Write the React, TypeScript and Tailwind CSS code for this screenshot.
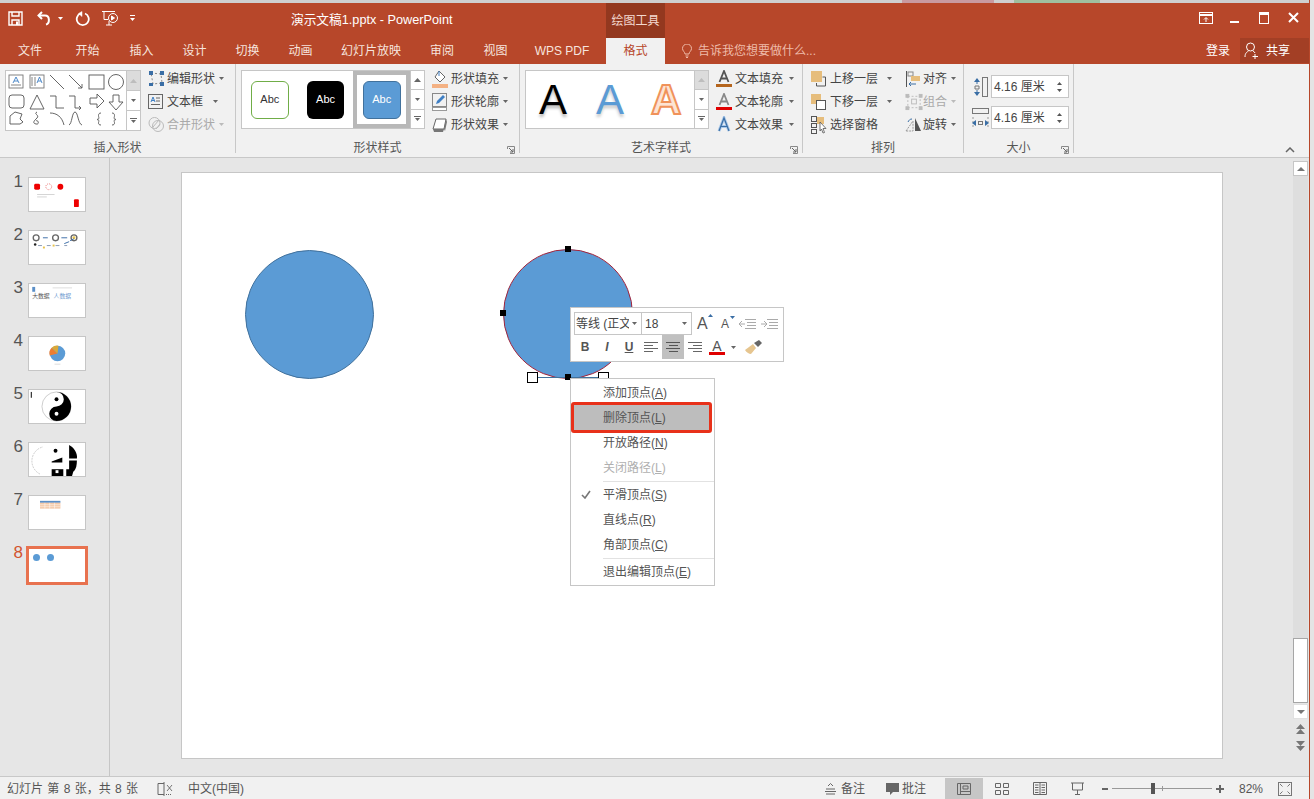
import React from "react";

const Caret = ({ color = "#666" }: { color?: string }) => (
  <svg width="5" height="3" viewBox="0 0 5 3" className="flex-none">
    <path d="M0 0h5L2.5 3z" fill={color} />
  </svg>
);

function RibbonBtn({
  icon,
  label,
  caretGap = "ml-[4px]",
  disabled,
  caret = true,
  slot = "w-[19px]",
}: {
  icon: React.ReactNode;
  label: string;
  caretGap?: string;
  disabled?: boolean;
  caret?: boolean;
  slot?: string;
}) {
  return (
    <div className={`flex items-center h-[23px] text-[12px] whitespace-nowrap ${disabled ? "text-[#a9a9a9]" : "text-[#444]"}`}>
      <span className={`${slot} h-[18px] flex-none flex items-center`}>{icon}</span>
      <span>{label}</span>
      {caret ? (
        <span className={caretGap}>
          <Caret color={disabled ? "#bbb" : "#666"} />
        </span>
      ) : null}
    </div>
  );
}

function ScrollCol({ topDisabled, rows = "h-[59px]" }: { topDisabled?: boolean; rows?: string }) {
  return (
    <div className={`w-[14px] flex-none flex flex-col border border-l-0 border-[#c6c6c6] ${rows}`}>
      <div className={`flex-1 flex items-center justify-center border-b border-[#c6c6c6] ${topDisabled ? "bg-[#dcdcdc]" : "bg-white"}`}>
        <svg width="7" height="4" viewBox="0 0 7 4">
          <path d="M0 4h7L3.5 0z" fill={topDisabled ? "#bdbdbd" : "#666"} />
        </svg>
      </div>
      <div className="flex-1 flex items-center justify-center border-b border-[#c6c6c6] bg-white">
        <Caret />
      </div>
      <div className="flex-1 flex flex-col items-center justify-center gap-[1px] bg-white">
        <div className="w-[7px] h-px bg-[#666]" />
        <Caret />
      </div>
    </div>
  );
}

function Group({ label, width, launcher, children }: { label: string; width: string; launcher?: boolean; children: React.ReactNode }) {
  return (
    <div className={`${width} flex-none flex flex-col pt-[3px] mb-[4px] border-r border-[#c8c8c8] relative`}>
      <div className="h-[70px] flex-none flex items-start">{children}</div>
      <div className="h-[16px] pt-[5px] flex items-center justify-center text-[12px] text-[#555]">{label}</div>
      {launcher ? (
        <svg width="8" height="8" viewBox="0 0 8 8" className="absolute right-[4px] -bottom-[1px]">
          <path d="M0.5 3V0.5H7.5V7.5H3" fill="none" stroke="#888" />
          <path d="M2 2l4 4M6 3v3H3" fill="none" stroke="#666" />
        </svg>
      ) : null}
    </div>
  );
}

function ShapesGallery() {
  return (
    <svg width="120" height="59" viewBox="0 0 120 59" fill="none" stroke="#555" strokeWidth="0.9">
      <rect x="3" y="4" width="14" height="13" stroke="#777" />
      <path d="M7 12l3-6 3 6M8 10h4" stroke="#3f7fc4" />
      <path d="M5 14h10" stroke="#777" />
      <rect x="24" y="4" width="14" height="13" stroke="#777" />
      <path d="M26 6v9M29 6v9" stroke="#777" />
      <path d="M31 12l2.500-6 2.500 6M32 10h3" stroke="#3f7fc4" />
      <path d="M44 4l14 14" />
      <path d="M63 4l13 13M76 13v4h-4" />
      <rect x="83" y="4" width="15" height="14" />
      <circle cx="110" cy="11" r="7.500" />
      <rect x="3" y="24" width="15" height="13" rx="3" />
      <path d="M31 24l7 14H24z" />
      <path d="M44 25h6v12h8" />
      <path d="M63 25h6v12h6M73 35l2 2-2 2" />
      <path d="M84 27h7v-4l7 7-7 7v-4h-7z" />
      <path d="M107 24h6v7h4l-7 8-7-8h4z" />
      <path d="M4 53V45l5-4 7 2-2 5 3 3-3 2z" />
      <path d="M31 41c-4 2 3 3 0 6s-5 5-1 6 2-5 0-3" />
      <path d="M44 42c7 0 12 4 14 12" />
      <path d="M63 54c3-1 3-13 6-13s3 12 7 13" />
      <path d="M95 42c-4 0-2 5-2 5 0 1-1 1-2 1.500 1 .5 2 .5 2 1.500 0 0-2 4 2 4" />
      <path d="M106 42c4 0 2 5 2 5 0 1 1 1 2 1.500-1 .5-2 .5-2 1.500 0 0 2 4-2 4" />
    </svg>
  );
}

const Abc = ({ cls }: { cls: string }) => (
  <div className={`w-[38px] h-[38px] rounded-[6px] flex items-center justify-center text-[11px] ${cls}`}>Abc</div>
);

const IconEditShape = (
  <svg width="17" height="17" viewBox="0 0 17 17" fill="none">
    <path d="M3 3l10 1 1 9-9 1z" stroke="#8a8a8a" strokeDasharray="2 2" />
    <g fill="#3a6ea5">
      <rect x="1" y="1" width="4" height="4" />
      <rect x="12" y="1" width="4" height="4" />
      <rect x="12" y="12" width="4" height="4" />
      <rect x="1" y="13" width="4" height="3" />
    </g>
  </svg>
);
const IconTextBox = (
  <svg width="15" height="15" viewBox="0 0 15 15" fill="none">
    <rect x="0.500" y="0.500" width="14" height="14" stroke="#666" />
    <path d="M3 8l2-5 2 5M3.700 6.500h2.600" stroke="#3f7fc4" />
    <path d="M8 4h4M8 7h4M3 10.500h9" stroke="#666" />
  </svg>
);
const IconMerge = (
  <svg width="17" height="17" viewBox="0 0 17 17" fill="none" stroke="#bbb">
    <circle cx="6.500" cy="7" r="5.500" />
    <circle cx="10" cy="10" r="5.500" />
    <path d="M5 11l6-7M8 13l4-5" />
  </svg>
);
const IconFill = (
  <svg width="17" height="18" viewBox="0 0 17 18" fill="none">
    <path d="M7 1l6 6-5 5-5-5z" stroke="#666" fill="#fff" />
    <path d="M7 1v5" stroke="#3f7fc4" />
    <rect x="0" y="14" width="16" height="4" fill="#f4b183" />
  </svg>
);
const IconOutline = (
  <svg width="16" height="18" viewBox="0 0 16 18" fill="none">
    <rect x="0.500" y="0.500" width="14" height="13" stroke="#888" />
    <path d="M4 11l1-3 6-6 2 2-6 6z" fill="#3f7fc4" />
    <rect x="0.500" y="14.500" width="14" height="3" stroke="#999" fill="#fff" />
  </svg>
);
const IconEffect = (
  <svg width="16" height="16" viewBox="0 0 16 16">
    <path d="M4 2h10l-2 10H1z" fill="#fff" stroke="#666" />
    <path d="M1 12h11l-1 3H2z" fill="#777" />
    <path d="M12 12l2-10 1 3-2 9z" fill="#777" />
  </svg>
);
const LetterIcon = ({ bar, color = "#555" }: { bar: string; color?: string }) => (
  <svg width="16" height="18" viewBox="0 0 16 18" fill="none">
    <path d="M3.500 12L8 1l4.500 11M5 8.500h6" stroke={color} strokeWidth="1.800" />
    <rect x="0" y="14" width="16" height="3" fill={bar} />
  </svg>
);
const IconTextEffect = (
  <svg width="16" height="18" viewBox="0 0 16 18" fill="none">
    <path d="M3 15L8 2l5 13M5 10.500h6" stroke="#a9c8ea" strokeWidth="3" />
    <path d="M3 15L8 2l5 13M5 10.500h6" stroke="#3a6ea5" strokeWidth="1.200" />
  </svg>
);
const IconForward = (
  <svg width="15" height="16" viewBox="0 0 15 16" fill="none">
    <rect x="0" y="0" width="11" height="11" fill="#e6bd7c" />
    <path d="M11.500 6h3v9h-9v-3" stroke="#555" />
  </svg>
);
const IconBackward = (
  <svg width="15" height="16" viewBox="0 0 15 16" fill="none">
    <rect x="0" y="0" width="10" height="10" fill="#e6bd7c" />
    <rect x="5.500" y="6.500" width="9" height="9" fill="#fff" stroke="#555" />
  </svg>
);
const IconPane = (
  <svg width="17" height="18" viewBox="0 0 17 18" fill="none">
    <rect x="6" y="1" width="7" height="7" fill="#e6bd7c" />
    <rect x="0.500" y="0.500" width="5" height="5" stroke="#555" />
    <rect x="0.500" y="7.500" width="5" height="4" stroke="#555" />
    <rect x="0.500" y="13.500" width="5" height="4" stroke="#555" />
    <path d="M9 6l6 6.500h-3l1.500 4-1.500 .5-1.500-4L9 15z" fill="#fff" stroke="#555" strokeWidth="0.800" />
  </svg>
);
const IconAlign = (
  <svg width="15" height="16" viewBox="0 0 15 16" fill="none">
    <path d="M1.500 0v16" stroke="#555" />
    <rect x="3" y="1" width="5" height="4" fill="none" stroke="#888" />
    <rect x="6" y="5" width="9" height="5" fill="#e6bd7c" />
    <path d="M4 13h7M4 13l2-2M4 13l2 2" stroke="#3a6ea5" />
  </svg>
);
const IconGroupObj = (
  <svg width="19" height="18" viewBox="0 0 19 18" fill="none" stroke="#bbb">
    <rect x="3" y="3" width="13" height="12" strokeDasharray="2 2" />
    <rect x="7" y="6" width="5" height="5" />
    <g fill="#bbb">
      <rect x="1" y="1" width="3" height="3" />
      <rect x="15" y="1" width="3" height="3" />
      <rect x="1" y="14" width="3" height="3" />
      <rect x="15" y="14" width="3" height="3" />
    </g>
  </svg>
);
const IconRotate = (
  <svg width="17" height="17" viewBox="0 0 17 17" fill="none">
    <path d="M1 15L8 5v10z" stroke="#999" strokeDasharray="2 1" />
    <path d="M10 2l6 13h-6z" fill="#555" />
    <path d="M3 6c1-2 2-3 4-3" stroke="#3a6ea5" />
  </svg>
);
const IconHeight = (
  <svg width="17" height="22" viewBox="0 0 17 22" fill="none">
    <rect x="10.500" y="1.500" width="5" height="19" stroke="#777" />
    <path d="M5 3v5M5 14v5" stroke="#3a6ea5" />
    <path d="M2 6l3-4 3 4zM2 16l3 4 3-4z" fill="#3a6ea5" />
    <path d="M3 10h4v3H3z" stroke="#777" />
  </svg>
);
const IconWidth = (
  <svg width="17" height="22" viewBox="0 0 17 22" fill="none">
    <rect x="0.500" y="1.500" width="16" height="5" stroke="#777" />
    <path d="M1 10v10M16 10v10" stroke="#999" strokeDasharray="2 2" />
    <path d="M0 16l4-3v6zM17 16l-4-3v6z" fill="#3a6ea5" />
    <rect x="6.500" y="14.500" width="4" height="3" stroke="#777" />
  </svg>
);

function SizeInput({ value }: { value: string }) {
  return (
    <div className="w-[78px] h-[23px] bg-white border border-[#c6c6c6] flex items-center pl-[2px] pr-[6px] text-[12px] text-[#444] justify-between">
      <span>{value}</span>
      <span className="flex flex-col gap-[4px]">
        <svg width="5" height="3" viewBox="0 0 5 3"><path d="M0 3h5L2.500 0z" fill="#555" /></svg>
        <Caret color="#555" />
      </span>
    </div>
  );
}

function TitleBar() {
  return (
    <div className="h-[35px] flex-none bg-[#b7472a] flex text-white">
      <div className="w-[291px] flex-none flex items-center pl-[8px] pb-[5px]">
        <svg width="15" height="15" viewBox="0 0 15 15" fill="none" stroke="#fff" strokeWidth="1.400">
          <path d="M1 1h13v13H1z" />
          <path d="M4 1v4h7V1M4 14V9h7v5" />
          <path d="M8 10.500h2v3.500H8z" fill="#fff" stroke="none" />
        </svg>
        <svg width="15" height="15" viewBox="0 0 15 15" fill="none" stroke="#fff" strokeWidth="2" className="ml-[14px]">
          <path d="M5 1L1.500 4.500 5 8" />
          <path d="M2 4.500h6c5 0 5 8 1 9" />
        </svg>
        <span className="ml-[6px]"><Caret color="#fff" /></span>
        <svg width="15" height="15" viewBox="0 0 15 15" fill="none" stroke="#fff" strokeWidth="1.800" className="ml-[12px]">
          <path d="M5.500 2.500A6 6 0 1 0 10 2.500" />
          <path d="M7 0.500v5L3.500 2.500z" fill="#fff" strokeWidth="0.500" />
        </svg>
        <svg width="17" height="16" viewBox="0 0 17 16" fill="none" stroke="#fff" className="ml-[12px]">
          <path d="M0 1.500h13M2 1.500v8h4M4 15h6M7 11v4" />
          <circle cx="11" cy="8" r="4.500" />
          <path d="M9.500 6v4l3-2z" fill="#fff" />
        </svg>
        <div className="ml-[11px] flex flex-col items-center gap-[2px]">
          <div className="w-[5px] h-px bg-white" />
          <Caret color="#fff" />
        </div>
      </div>
      <div className="w-[315px] flex-none flex items-center text-[12.700px]">演示文稿1.pptx - PowerPoint</div>
      <div className="w-[59px] flex-none bg-[#93381f] flex items-center justify-center text-[12px] text-[#f3d9d0]">绘图工具</div>
      <div className="flex-1 flex items-start justify-end pt-[9px]">
        <svg width="14" height="12" viewBox="0 0 14 12" fill="none" stroke="#fff" className="mr-[17px]">
          <rect x="0.500" y="0.500" width="13" height="11" />
          <path d="M0.500 3h13" strokeWidth="2" />
          <path d="M7 10V6M5 7.500l2-2 2 2" />
        </svg>
        <div className="w-[9px] h-[2px] bg-white mt-[9px] mr-[20px]" />
        <div className="w-[10px] h-[12px] border border-white border-t-[3px] mr-[19px]" />
        <svg width="11" height="11" viewBox="0 0 11 11" stroke="#fff" strokeWidth="2" className="mr-[10px]">
          <path d="M1 1l9 9M10 1l-9 9" />
        </svg>
      </div>
    </div>
  );
}

const tabs: [string, string][] = [
  ["文件", "w-[60px]"],
  ["开始", "w-[55px]"],
  ["插入", "w-[53px]"],
  ["设计", "w-[53px]"],
  ["切换", "w-[53px]"],
  ["动画", "w-[53px]"],
  ["幻灯片放映", "w-[88px]"],
  ["审阅", "w-[54px]"],
  ["视图", "w-[53px]"],
  ["WPS PDF", "w-[80px]"],
];

function TabBar() {
  return (
    <div className="h-[26px] flex-none bg-[#b7472a] flex text-[12px] text-[#f6e4de] items-stretch">
      {tabs.map(([t, w]) => (
        <div key={t} className={`${w} flex-none flex items-center justify-center whitespace-nowrap`}>
          {t}
        </div>
      ))}
      <div className="w-[4px] flex-none" />
      <div className="w-[59px] flex-none bg-[#f1f1f1] text-[#b7472a] flex items-center justify-center">格式</div>
      <div className="w-[27px] flex-none flex items-center justify-end">
        <svg width="10" height="14" viewBox="0 0 10 14" fill="none" stroke="#eebba9">
          <path d="M3 10c0-2-2.500-3-2.500-5.500a4.500 4.500 0 0 1 9 0C9.500 7 7 8 7 10zM3.500 12h3M4 13.500h2" />
        </svg>
      </div>
      <div className="ml-[6px] flex-none w-[508px] flex items-center text-[#eebba9]">告诉我您想要做什么...</div>
      <div className="w-[34px] flex-none flex items-center text-white">登录</div>
      <div className="flex-1 flex items-center bg-[#a33f25] text-white mb-[1px]">
        <svg width="15" height="17" viewBox="0 0 15 17" fill="none" stroke="#fff" className="ml-[4px]">
          <circle cx="6.500" cy="5" r="4" />
          <path d="M1 15c0-4 2-5 3.500-6M9 9c1 .5 1.500 1 2 2M11 12v5M8.500 14.500h5.500" />
        </svg>
        <span className="ml-[7px]">共享</span>
      </div>
    </div>
  );
}

function Ribbon() {
  return (
    <div className="h-[94px] flex-none bg-[#f1f1f1] border-b border-[#c8c8c8] flex relative">
      <Group label="插入形状" width="w-[236px]">
        <div className="ml-[5px] mt-[3px] flex flex-none">
          <div className="w-[122px] h-[61px] bg-white border border-[#c6c6c6]">
            <ShapesGallery />
          </div>
          <ScrollCol topDisabled rows="h-[61px]" />
        </div>
        <div className="ml-[7px] flex flex-col">
          <RibbonBtn icon={IconEditShape} label="编辑形状" />
          <RibbonBtn icon={IconTextBox} label="文本框" caretGap="ml-[10px]" />
          <RibbonBtn icon={IconMerge} label="合并形状" disabled />
        </div>
      </Group>
      <Group label="形状样式" width="w-[284px]" launcher>
        <div className="ml-[5px] mt-[3px] flex flex-none">
          <div className="w-[170px] h-[59px] bg-white border border-[#c6c6c6] flex items-center pl-[9px]">
            <Abc cls="bg-white border border-[#70ad47] text-[#333]" />
            <Abc cls="ml-[18px] bg-black text-white" />
            <div className="ml-[9px] w-[57px] h-[57px] border-[4px] border-[#b8b8b8] flex items-center justify-center">
              <Abc cls="bg-[#5b9bd5] border border-[#41719c] text-white" />
            </div>
          </div>
          <ScrollCol />
        </div>
        <div className="ml-[7px] flex flex-col">
          <RibbonBtn icon={IconFill} label="形状填充" />
          <RibbonBtn icon={IconOutline} label="形状轮廓" />
          <RibbonBtn icon={IconEffect} label="形状效果" />
        </div>
      </Group>
      <Group label="艺术字样式" width="w-[283px]" launcher>
        <div className="ml-[5px] mt-[3px] flex flex-none">
          <div className="w-[170px] h-[59px] bg-white border border-[#c6c6c6] flex items-center text-[42px] leading-none font-['Liberation_Sans',sans-serif]">
            <span className="ml-[13px] text-black [text-shadow:0_3px_3px_#bbb]">A</span>
            <span className="ml-[29px] text-[#5b9bd5] [text-shadow:0_3px_3px_#ccc]">A</span>
            <span className="ml-[27px] font-bold text-[#fde4d3] [-webkit-text-stroke:2px_#f0925a]">A</span>
          </div>
          <ScrollCol topDisabled />
        </div>
        <div className="ml-[7px] flex flex-col">
          <RibbonBtn icon={<LetterIcon bar="#b5651d" />} label="文本填充" caretGap="ml-[6px]" />
          <RibbonBtn icon={<LetterIcon bar="#e00000" color="#888" />} label="文本轮廓" caretGap="ml-[6px]" />
          <RibbonBtn icon={IconTextEffect} label="文本效果" caretGap="ml-[6px]" />
        </div>
      </Group>
      <Group label="排列" width="w-[161px]">
        <div className="ml-[8px] flex flex-col flex-none w-[94px]">
          <RibbonBtn icon={IconForward} label="上移一层" caretGap="ml-[9px]" />
          <RibbonBtn icon={IconBackward} label="下移一层" caretGap="ml-[9px]" />
          <RibbonBtn icon={IconPane} label="选择窗格" caret={false} />
        </div>
        <div className="flex flex-col">
          <RibbonBtn icon={IconAlign} label="对齐" slot="w-[18px]" />
          <RibbonBtn icon={IconGroupObj} label="组合" slot="w-[18px]" disabled />
          <RibbonBtn icon={IconRotate} label="旋转" slot="w-[18px]" />
        </div>
      </Group>
      <Group label="大小" width="w-[110px]" launcher>
        <div className="ml-[8px] mt-[8px] flex flex-col gap-[8px]">
          <div className="flex items-center">
            <span className="w-[19px] flex-none">{IconHeight}</span>
            <SizeInput value="4.16 厘米" />
          </div>
          <div className="flex items-center">
            <span className="w-[19px] flex-none">{IconWidth}</span>
            <SizeInput value="4.16 厘米" />
          </div>
        </div>
      </Group>
      <svg width="10" height="6" viewBox="0 0 10 6" fill="none" stroke="#666" strokeWidth="1.500" className="absolute left-[1285px] bottom-[4px]">
        <path d="M1 5l4-4 4 4" />
      </svg>
    </div>
  );
}

function Thumb1() {
  return (
    <>
      <rect x="5" y="6" width="6" height="6" rx="1.500" fill="#ee0000" />
      <circle cx="20" cy="9" r="3" fill="none" stroke="#e02020" strokeWidth="0.600" strokeDasharray="1 1" />
      <circle cx="32" cy="9" r="3" fill="#ee0000" />
      <path d="M8 17h18M8 19.500h10" stroke="#c8c8c8" strokeWidth="0.800" />
      <rect x="46" y="22" width="5" height="8" rx="1" fill="#ee0000" />
    </>
  );
}
function Thumb2() {
  return (
    <>
      {[7, 27, 46].map((x) => (
        <circle key={x} cx={x} cy="7" r="3" fill="#fff" stroke="#666" strokeWidth="1.400" />
      ))}
      <path d="M14 7h5M33 7h6" stroke="#3f6fa8" />
      <circle cx="46" cy="7" r="1.500" fill="#e8c24a" />
      <circle cx="6" cy="14" r="1.300" fill="#222" />
      <path d="M9 15h4M18 15h4M27 15h4M36 15h3" stroke="#8a9bb5" />
      <rect x="14" y="16" width="2" height="2" fill="#e8c24a" />
      <rect x="24" y="14" width="2" height="2" fill="#e8c24a" />
      <path d="M36 13l5-2M42 10l4-2" stroke="#3f6fa8" />
    </>
  );
}
function Thumb3() {
  return (
    <>
      <rect x="3" y="3" width="3" height="5" fill="#5b8fc7" />
      <text x="3" y="14" fontSize="6" fill="#555">大数据</text>
      <text x="25" y="14" fontSize="6" fill="#6f9bd0">人数据</text>
      <path d="M24 4h20" stroke="#ccc" strokeWidth="0.700" />
    </>
  );
}
function Thumb4() {
  return (
    <>
      <circle cx="29" cy="17" r="8" fill="#5b9bd5" />
      <path d="M29 17L21 19A8 8 0 0 1 23 11z" fill="#ed7d31" />
      <path d="M29 17L23 11A8 8 0 0 1 30 9z" fill="#d9a93a" />
      <path d="M26 28h6" stroke="#ccc" strokeWidth="0.700" />
    </>
  );
}
function Thumb5() {
  return (
    <>
      <rect x="1.500" y="2" width="1" height="6" fill="#000" />
      <circle cx="28" cy="17" r="15" fill="#fff" stroke="#999" strokeWidth="0.500" />
      <path d="M28 2a15 15 0 0 1 0 30 7.500 7.500 0 0 1 0-15 7.500 7.500 0 0 0 0-15z" fill="#000" />
      <circle cx="28" cy="9.500" r="2" fill="#000" />
      <circle cx="28" cy="24.500" r="2" fill="#fff" />
    </>
  );
}
function Thumb6() {
  return (
    <>
      <path d="M11 32A15 15 0 0 1 14 4" fill="none" stroke="#999" strokeWidth="0.500" strokeDasharray="2 1" />
      <circle cx="27" cy="8" r="2" fill="#000" />
      <path d="M23 19l11-4v5H23z" fill="#000" />
      <path d="M41 2c4 2 9 8 8 14H41z" fill="#000" />
      <path d="M41 18h8c0 5-1 9-3 11h-5z" fill="#000" />
      <path d="M23 27h12v7H23z" fill="#000" />
      <rect x="27" y="28" width="3" height="3" fill="#fff" />
      <path d="M38 34v-7h8l-2 7z" fill="#000" />
    </>
  );
}
function Thumb7() {
  return (
    <>
      <rect x="11" y="5" width="21" height="2" fill="#5b8fc7" />
      <rect x="11" y="7" width="21" height="6" fill="#f4c9a8" />
      <path d="M11 9h21M11 11h21" stroke="#fff" strokeWidth="0.500" />
      <path d="M16 7v6M21 7v6M26 7v6" stroke="#fff" strokeWidth="0.500" />
    </>
  );
}

const thumbs = [Thumb1, Thumb2, Thumb3, Thumb4, Thumb5, Thumb6, Thumb7];

function ThumbPanel() {
  return (
    <div className="w-[110px] flex-none border-r border-[#c6c6c6] pt-[14px]">
      {thumbs.map((T, i) => (
        <div key={i} className="h-[53px] flex items-start">
          <span className="w-[23px] text-right text-[17px] leading-5 text-[#555]">{i + 1}</span>
          <svg width="58" height="35" viewBox="0 0 57 34" className="ml-[5px] mt-[5px] bg-white border border-[#c6c6c6] font-['Noto_Sans_CJK_SC',sans-serif]">
            <T />
          </svg>
        </div>
      ))}
      <div className="h-[53px] flex items-start">
        <span className="w-[23px] text-right text-[17px] leading-5 text-[#d2542f]">8</span>
        <div className="ml-[3px] mt-[3px] w-[62px] h-[39px] bg-white border-[3px] border-[#e8724f] flex items-start gap-[7px] pl-[4px] pt-[5px]">
          <div className="w-[7px] h-[7px] rounded-full bg-[#5b9bd5]" />
          <div className="w-[7px] h-[7px] rounded-full bg-[#5b9bd5]" />
        </div>
      </div>
    </div>
  );
}

const Handle = ({ pos }: { pos: string }) => <div className={`absolute w-[6px] h-[6px] bg-black ${pos}`} />;

function Slide() {
  return (
    <div className="relative w-[1042px] h-[587px] bg-white border border-[#c6c6c6]">
      <div className="absolute left-[63px] top-[77px] w-[129px] h-[129px] rounded-full bg-[#5b9bd5] border border-[#41719c]" />
      <div className="absolute left-[321px] top-[76px] w-[130px] h-[130px] rounded-full bg-[#5b9bd5] border border-[#a3243b]" />
      <div className="absolute left-[351px] top-[204px] w-[70px] h-px bg-[#41719c]" />
      <div className="absolute left-[345px] top-[199px] w-[11px] h-[11px] bg-white border border-black" />
      <div className="absolute left-[416px] top-[199px] w-[11px] h-[11px] bg-white border border-black" />
      <Handle pos="left-[383px] top-[73px]" />
      <Handle pos="left-[318px] top-[137px]" />
      <Handle pos="left-[383px] top-[201px]" />
    </div>
  );
}

function Scrollbar() {
  const dbl = (up: boolean) => (
    <svg width="11" height="11" viewBox="0 0 11 11" className="mx-auto">
      <path d={up ? "M5.500 0L10 5H1zM5.500 5L10 10H1z" : "M1 1h9L5.500 6zM1 6h9l-4.500 5z"} fill="#777" />
    </svg>
  );
  return (
    <div className="w-[15px] flex-none flex flex-col pt-[3px]">
      <div className="h-[15px] bg-white border border-[#c6c6c6] flex items-center justify-center">
        <svg width="8" height="4" viewBox="0 0 8 4"><path d="M0 4h8L4 0z" fill="#777" /></svg>
      </div>
      <div className="h-[462px] bg-[#dedede]" />
      <div className="h-[65px] bg-white border border-[#a6a6a6]" />
      <div className="h-[15px] mt-[1px] bg-white border border-[#e0e0e0] flex items-center justify-center">
        <svg width="8" height="4" viewBox="0 0 8 4"><path d="M0 0h8L4 4z" fill="#777" /></svg>
      </div>
      <div className="mt-[5px] flex flex-col gap-[5px]">
        {dbl(true)}
        {dbl(false)}
      </div>
    </div>
  );
}

function StatusBar() {
  return (
    <div className="h-[23px] flex-none bg-[#f1f1f1] border-t border-[#c8c8c8] flex items-stretch text-[12px] text-[#555] pt-[1px]">
      <div className="w-[157px] flex-none pl-[7px] flex items-center whitespace-nowrap [word-spacing:1px]">幻灯片 第 8 张，共 8 张</div>
      <div className="w-[31px] flex-none flex items-center">
        <svg width="16" height="14" viewBox="0 0 16 14" fill="none" stroke="#666">
          <path d="M7 1.500H1v11h6M7 0v14" />
          <path d="M10 3l5 6M15 3l-5 6" strokeWidth="0.900" />
          <path d="M9 12.500h6" strokeDasharray="1 1" />
        </svg>
      </div>
      <div className="w-[637px] flex-none flex items-center">中文(中国)</div>
      <div className="w-[61px] flex-none flex items-center">
        <svg width="11" height="12" viewBox="0 0 11 12" fill="none" stroke="#666">
          <path d="M3 3l2.500-2.500L8 3M1 6h9M0 8.500h11M1 11h9" />
        </svg>
        <span className="ml-[5px]">备注</span>
      </div>
      <div className="w-[59px] flex-none flex items-center">
        <svg width="13" height="12" viewBox="0 0 13 12">
          <path d="M0 0h13v9H7l-3 3V9H0z" fill="#666" />
        </svg>
        <span className="ml-[3px]">批注</span>
      </div>
      <div className="w-[38px] flex-none bg-[#c6c6c6] flex items-center justify-center">
        <svg width="14" height="12" viewBox="0 0 14 12" fill="none" stroke="#666">
          <path d="M0.500 0.500h13v11H0.500zM3.500 0.500v11M3.500 8.500h10M6 3h5v3H6z" />
        </svg>
      </div>
      <div className="w-[38px] flex-none flex items-center justify-center">
        <svg width="14" height="12" viewBox="0 0 14 12" fill="none" stroke="#666">
          <path d="M0.500 0.500h5v4h-5zM8.500 0.500h5v4h-5zM0.500 7.500h5v4h-5zM8.500 7.500h5v4h-5z" />
        </svg>
      </div>
      <div className="w-[38px] flex-none flex items-center justify-center">
        <svg width="14" height="13" viewBox="0 0 14 13" fill="none" stroke="#666">
          <path d="M0.500 0.500h13v12H0.500zM7 0.500v12M2 3h3.500M2 5.500h3.500M2 8h3.500M2 10.500h3.500M8.500 3H12M8.500 5.500H12M8.500 8H12M8.500 10.500H12" />
        </svg>
      </div>
      <div className="w-[36px] flex-none flex items-center justify-center">
        <svg width="13" height="13" viewBox="0 0 13 13" fill="none" stroke="#666">
          <path d="M0 1h13M1.500 1v7h10V1M6.500 8v4M4 12.500h5" />
        </svg>
      </div>
      <div className="ml-[7px] w-[6px] flex-none h-[2px] bg-[#666] self-center" />
      <div className="w-[100px] ml-[4px] flex-none relative self-center h-px bg-[#999]">
        <div className="absolute left-[39px] -top-[5px] w-[4px] h-[11px] bg-[#555]" />
        <div className="absolute left-[50px] -top-[2px] w-px h-[5px] bg-[#999]" />
      </div>
      <svg width="8" height="8" viewBox="0 0 8 8" className="ml-[4px] self-center flex-none">
        <path d="M3 0h2v3h3v2H5v3H3V5H0V3h3z" fill="#666" />
      </svg>
      <div className="w-[54px] pl-[15px] flex-none flex items-center">82%</div>
      <svg width="14" height="14" viewBox="0 0 14 14" fill="none" stroke="#777" className="self-center flex-none">
        <rect x="0.500" y="0.500" width="13" height="13" />
        <path d="M2 2l2.500 2.500M12 2L9.500 4.500M2 12l2.500-2.500M12 12L9.500 9.500" />
      </svg>
    </div>
  );
}

function MiniToolbar() {
  const lines = (w: string[], key: string) => (
    <div key={key} className="flex flex-col gap-[2px]">
      {w.map((c, i) => (
        <div key={i} className={`h-px bg-[#666] ${c}`} />
      ))}
    </div>
  );
  return (
    <div className="absolute left-[570px] top-[307px] w-[214px] h-[55px] bg-white border border-[#c6c6c6] pl-[3px] pt-[4px]">
      <div className="flex items-center h-[23px]">
        <div className="w-[68px] h-[23px] border border-[#c6c6c6] flex items-center pl-[1px] text-[12px] text-[#444] whitespace-nowrap overflow-hidden">
          <span className="w-[53px] overflow-hidden">等线 (正文</span>
          <span className="ml-[3px]"><Caret /></span>
        </div>
        <div className="w-[50px] h-[23px] border border-l-0 border-[#c6c6c6] flex items-center justify-between pl-[3px] pr-[4px] text-[12px] text-[#444]">
          18
          <Caret />
        </div>
        <span className="ml-[5px] text-[16px] text-[#555] w-[22px] font-['Liberation_Sans',sans-serif] relative">
          A
          <svg width="5" height="3" viewBox="0 0 5 3" className="absolute left-[11px] top-[2px]"><path d="M0 3h5L2.500 0z" fill="#3a6ea5" /></svg>
        </span>
        <span className="text-[12px] text-[#555] w-[20px] font-['Liberation_Sans',sans-serif] relative pl-[2px]">
          A
          <svg width="5" height="3" viewBox="0 0 5 3" className="absolute left-[11px] top-[1px]"><path d="M0 0h5L2.500 3z" fill="#3a6ea5" /></svg>
        </span>
        <svg width="17" height="12" viewBox="0 0 17 12" fill="none" stroke="#aaa">
          <path d="M6 1.500h11M8 4.500h9M8 7.500h9M6 10.500h11M0 6h6M3 3L0 6l3 3" />
        </svg>
        <svg width="17" height="12" viewBox="0 0 17 12" fill="none" stroke="#aaa" className="ml-[5px]">
          <path d="M6 1.500h11M8 4.500h9M8 7.500h9M6 10.500h11M0 6h6M3 3l3 3-3 3" />
        </svg>
      </div>
      <div className="flex items-center h-[24px] text-[12px] text-[#555] font-['Liberation_Sans',sans-serif]">
        <span className="w-[22px] text-center font-bold">B</span>
        <span className="w-[22px] text-center italic font-semibold">I</span>
        <span className="w-[22px] text-center underline font-bold">U</span>
        <span className="w-[22px] h-[24px] flex items-center justify-center">{lines(["w-[14px]", "w-[9px]", "w-[14px]", "w-[9px]"], "l")}</span>
        <span className="w-[22px] h-[24px] flex items-center justify-center bg-[#c0c0c0]">
          <div className="flex flex-col gap-[2px] items-center">
            <div className="h-px bg-[#555] w-[14px]" />
            <div className="h-px bg-[#555] w-[9px]" />
            <div className="h-px bg-[#555] w-[14px]" />
            <div className="h-px bg-[#555] w-[9px]" />
          </div>
        </span>
        <span className="w-[22px] h-[24px] flex items-center justify-center">
          <div className="flex flex-col gap-[2px] items-end">
            <div className="h-px bg-[#666] w-[14px]" />
            <div className="h-px bg-[#666] w-[9px]" />
            <div className="h-px bg-[#666] w-[14px]" />
            <div className="h-px bg-[#666] w-[9px]" />
          </div>
        </span>
        <span className="w-[22px] flex flex-col items-center leading-[12px] text-[14px]">
          A
          <span className="w-[16px] h-[3px] bg-[#e00000]" />
        </span>
        <span className="ml-[3px]"><Caret /></span>
        <svg width="17" height="14" viewBox="0 0 17 14" className="ml-[9px]">
          <path d="M0 10l8-6 3 4-5 6c-2 0-5-2-6-4z" fill="#e6c58f" />
          <path d="M9 3l5-3 3 3-4 4z" fill="#666" />
        </svg>
      </div>
    </div>
  );
}

const menuItems: { a: string; k: string; muted?: boolean; hot?: boolean; check?: boolean; sep?: boolean }[] = [
  { a: "添加顶点", k: "A" },
  { a: "删除顶点", k: "L", hot: true },
  { a: "开放路径", k: "N" },
  { a: "关闭路径", k: "L", muted: true, sep: true },
  { a: "平滑顶点", k: "S", check: true },
  { a: "直线点", k: "R" },
  { a: "角部顶点", k: "C", sep: true },
  { a: "退出编辑顶点", k: "E" },
];

function ContextMenu() {
  return (
    <div className="absolute left-[570px] top-[378px] w-[145px] h-[208px] bg-white border border-[#c6c6c6] pt-[1px] text-[12px]">
      {menuItems.map((m) => (
        <React.Fragment key={m.a}>
          <div className={`relative h-[25px] flex items-center pl-[32px] whitespace-nowrap ${m.muted ? "text-[#b0b0b0]" : "text-[#555]"}`}>
            {m.hot ? <div className="absolute left-0 right-[2px] -top-[3px] -bottom-[3px] bg-[#bdbdbd] border-[3px] border-[#e8311a] rounded-[3px]" /> : null}
            {m.check ? (
              <svg width="10" height="9" viewBox="0 0 10 9" fill="none" stroke="#777" strokeWidth="1.600" className="absolute left-[10px] top-[8px]">
                <path d="M1 5l3 3 5-7" />
              </svg>
            ) : null}
            <span className="relative">
              {m.a}(<span className="underline">{m.k}</span>)
            </span>
          </div>
          {m.sep ? (
            <div className="h-[2px] flex items-center pl-[32px]">
              <div className="w-full h-px bg-[#e2e2e2]" />
            </div>
          ) : null}
        </React.Fragment>
      ))}
    </div>
  );
}

export default function App() {
  return (
    <div className="relative w-[1314px] h-[799px] overflow-hidden flex bg-[#e4e4e4] font-['Liberation_Sans','Noto_Sans_CJK_SC',sans-serif]">
      <div className="w-[1310px] flex-none flex flex-col border-r border-[#b7472a]">
        <div className="h-[3px] flex-none bg-[#cfcfcf] flex">
          <div className="w-[902px]" />
          <div className="w-[92px] bg-[#c99aa0]" />
          <div className="w-[20px]" />
          <div className="w-[86px] bg-[#9fbf9f]" />
        </div>
        <TitleBar />
        <TabBar />
        <Ribbon />
        <div className="flex-1 min-h-0 flex bg-[#e6e6e6]">
          <ThumbPanel />
          <div className="w-[1183px] flex-none pl-[71px] pt-[14px]">
            <Slide />
          </div>
          <Scrollbar />
        </div>
        <StatusBar />
      </div>
      <MiniToolbar />
      <ContextMenu />
    </div>
  );
}
